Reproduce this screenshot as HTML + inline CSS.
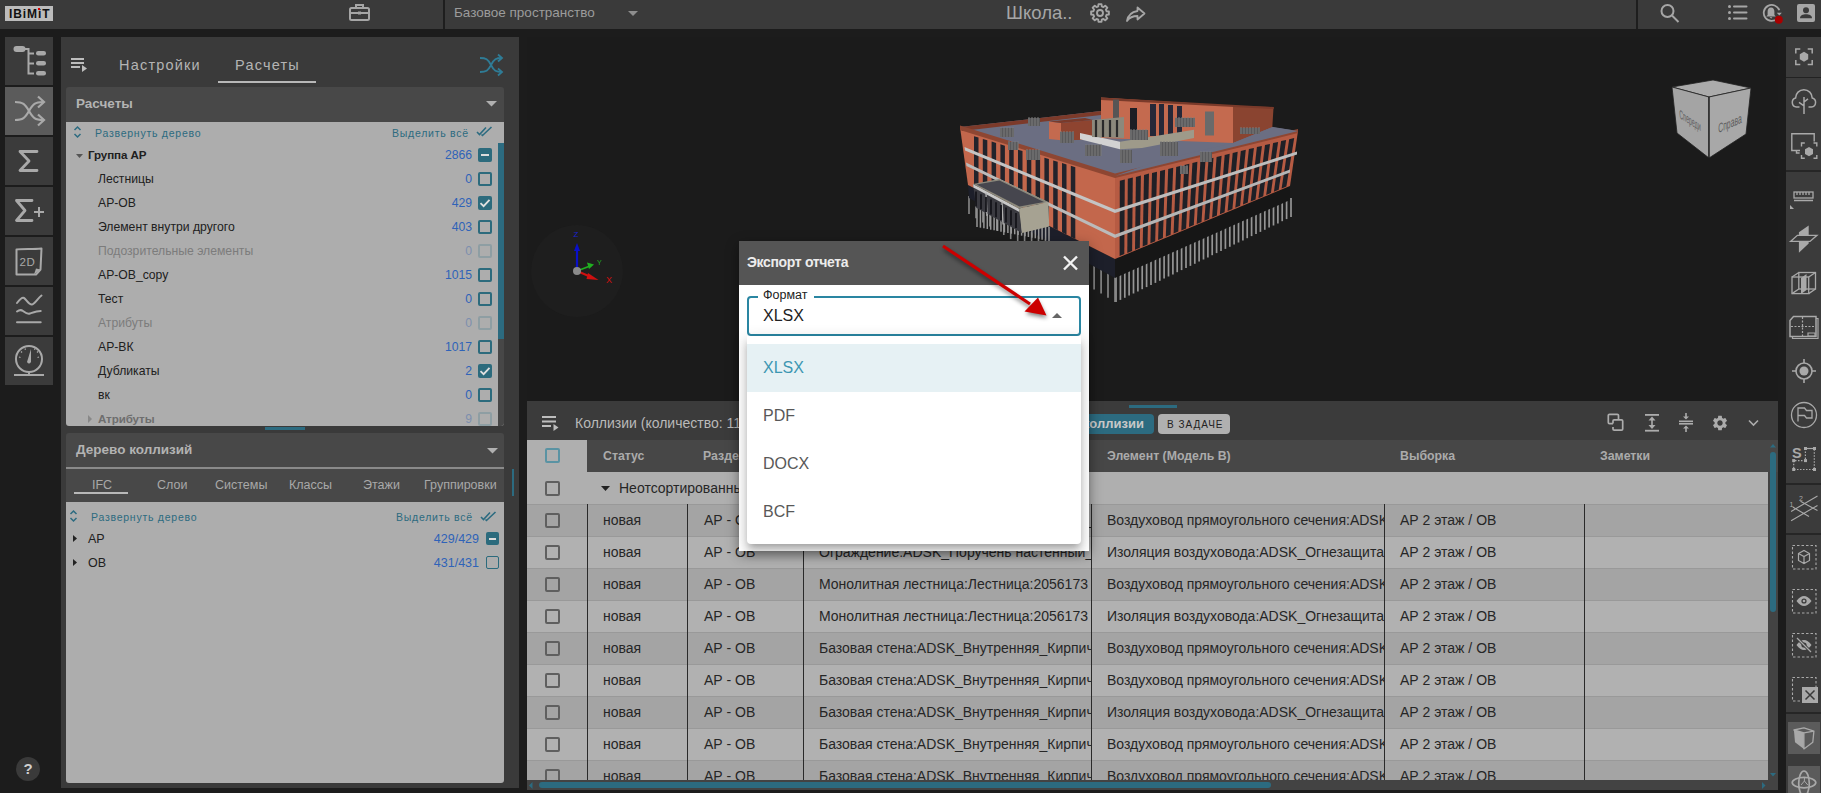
<!DOCTYPE html>
<html><head><meta charset="utf-8">
<style>
*{box-sizing:border-box;margin:0;padding:0}
html,body{width:1821px;height:793px;overflow:hidden;background:#1c1c1c;font-family:"Liberation Sans",sans-serif;position:relative}
.a{position:absolute}
svg{position:absolute;overflow:visible}
.sb{position:absolute;left:5px;width:48px;height:48px;background:#3b3b3b}
.t{position:absolute;white-space:nowrap;line-height:1}
.cb{position:absolute;width:14px;height:14px;border:2px solid #2c6b7d;border-radius:2px}
.cbd{position:absolute;width:15px;height:15px;border:2px solid #5f5f5f;border-radius:2px}
.rb{position:absolute;left:1787px;width:34px;background:#3b3b3b}
</style></head><body>
<div class="a" style="left:0;top:0;width:1821px;height:29px;background:#3a3a3a"></div>
<div class="a" style="left:5px;top:6px;width:48px;height:15px;background:#bcbcbc"></div>
<div class="t" style="left:9px;top:7.5px;font-size:12px;font-weight:bold;color:#111;letter-spacing:0.9px">IBiMiT</div><div class="a" style="left:38px;top:8px;width:2px;height:2px;background:#d00"></div>
<div class="a" style="left:443px;top:0;width:2px;height:29px;background:#1e1e1e"></div>
<div class="a" style="left:1636px;top:0;width:2px;height:29px;background:#1e1e1e"></div>
<div class="t" style="left:454px;top:6px;font-size:13.5px;color:#9c9c9c">Базовое пространство</div>
<svg style="left:628px;top:11px" width="11" height="6"><path d="M0 0H10L5 5Z" fill="#8e8e8e"/></svg>
<div class="t" style="left:1006px;top:4px;font-size:18.5px;color:#a6a6a6">Школа..</div>
<svg style="left:349px;top:3px" width="21" height="18"><g fill="none" stroke="#a6a6a6" stroke-width="2"><rect x="1" y="5" width="19" height="12" rx="1.5"/><path d="M7 5V2H14V5M1 10H20"/></g><rect x="9" y="8.5" width="3" height="3" fill="#a6a6a6"/></svg>
<svg style="left:1090px;top:3px" width="20" height="20"><path d="M16.56 8.23L18.88 8.52L18.88 11.48L16.56 11.77L15.90 13.39L17.32 15.23L15.23 17.32L13.39 15.90L11.77 16.56L11.48 18.88L8.52 18.88L8.23 16.56L6.61 15.90L4.77 17.32L2.68 15.23L4.10 13.39L3.44 11.77L1.12 11.48L1.12 8.52L3.44 8.23L4.10 6.61L2.68 4.77L4.77 2.68L6.61 4.10L8.23 3.44L8.52 1.12L11.48 1.12L11.77 3.44L13.39 4.10L15.23 2.68L17.32 4.77L15.90 6.61Z" fill="none" stroke="#a6a6a6" stroke-width="1.9" stroke-linejoin="round"/><circle cx="10" cy="10" r="3" fill="none" stroke="#a6a6a6" stroke-width="1.9"/></svg>
<svg style="left:1126px;top:6px" width="20" height="16"><path d="M11.5 1.5L18.5 7.5L11.5 13.5V10C6.5 10 3.5 11.3 1 15C2 9.5 5 6 11.5 5Z" fill="none" stroke="#a6a6a6" stroke-width="1.8" stroke-linejoin="round"/></svg>
<svg style="left:1660px;top:4px" width="20" height="18"><g fill="none" stroke="#a6a6a6" stroke-width="2"><circle cx="7.5" cy="7" r="6"/><path d="M12 11.5L18.5 18"/></g></svg>
<svg style="left:1728px;top:5px" width="20" height="15"><g fill="#a6a6a6"><circle cx="1.5" cy="1.5" r="1.5"/><circle cx="1.5" cy="7.5" r="1.5"/><circle cx="1.5" cy="13.5" r="1.5"/><rect x="5" y="0.5" width="14.5" height="2" rx="1"/><rect x="5" y="6.5" width="14.5" height="2" rx="1"/><rect x="5" y="12.5" width="14.5" height="2" rx="1"/></g></svg>
<svg style="left:1762px;top:4px" width="22" height="19"><path d="M15.5 14.5A8 8 0 1 1 17.3 6.3" fill="none" stroke="#a6a6a6" stroke-width="1.8"/><path d="M14.8 8.8H19.8L17.3 11.5Z" fill="#a6a6a6"/><path d="M9 3.5C6.7 3.5 5.6 5.4 5.6 7.8V11L4.2 12.6H13.8L12.4 11V7.8C12.4 5.4 11.3 3.5 9 3.5Z M7.8 13.2H10.2C10.2 14 9.7 14.4 9 14.4S7.8 14 7.8 13.2Z" fill="#a6a6a6"/><circle cx="16.8" cy="15.8" r="4" fill="#a80000"/></svg>
<svg style="left:1797px;top:4px" width="18" height="18"><rect width="18" height="18" rx="2" fill="#a6a6a6"/><circle cx="9" cy="6.3" r="3" fill="#3a3a3a"/><path d="M3 14.2C3 11.3 6 10.3 9 10.3S15 11.3 15 14.2Z" fill="#3a3a3a"/></svg>
<div class="sb" style="top:37px;background:#3b3b3b"></div>
<div class="sb" style="top:87px;background:#5b5b5b"></div>
<div class="sb" style="top:137px;background:#3b3b3b"></div>
<div class="sb" style="top:187px;background:#3b3b3b"></div>
<div class="sb" style="top:237px;background:#3b3b3b"></div>
<div class="sb" style="top:287px;background:#3b3b3b"></div>
<div class="sb" style="top:337px;background:#3b3b3b"></div>
<svg style="left:5px;top:37px" width="48" height="48"><g fill="#a9a9a9"><rect x="8.5" y="9" width="12" height="6" rx="3"/><rect x="31" y="14" width="10" height="4.5" rx="2.25"/><rect x="31" y="24" width="10" height="4.5" rx="2.25"/><rect x="31" y="34" width="10" height="4.5" rx="2.25"/></g><path d="M19 12H23.5V36.5H29M23.5 16.5H29M23.5 26.5H29" fill="none" stroke="#a9a9a9" stroke-width="2"/></svg>
<svg style="left:5px;top:87px" width="48" height="48"><g fill="none" stroke="#a9a9a9" stroke-width="2.2"><path d="M10 15C18 15 20 17 24 24S30 33 38 33M10 33C18 33 20 31 24 24S30 15 38 15"/><path d="M33 9.5L39 15L33 20.5M33 27.5L39 33L33 38.5"/></g></svg>
<svg style="left:5px;top:137px" width="48" height="48"><path d="M32 14.5H15L24 24L15 33.5H32" fill="none" stroke="#a9a9a9" stroke-width="2.8" stroke-linecap="round" stroke-linejoin="round"/></svg>
<svg style="left:5px;top:187px" width="48" height="48"><path d="M27 13.5H11.5L20 23.5L11.5 33.5H27" fill="none" stroke="#a9a9a9" stroke-width="2.8" stroke-linecap="round" stroke-linejoin="round"/><path d="M34 20V30M29 25H39" stroke="#a9a9a9" stroke-width="2"/></svg>
<svg style="left:5px;top:237px" width="48" height="48"><path d="M11.5 12.5C18 11.5 27 12.5 36.5 11.5L35.5 32.5L31 37.5H11.5Z" fill="none" stroke="#a9a9a9" stroke-width="2" stroke-linejoin="round"/><path d="M29 37.5L35.5 32.5L31 31.5Z" fill="#a9a9a9"/><text x="14.5" y="28.5" font-family="Liberation Sans" font-size="11.5" fill="#a9a9a9" letter-spacing="0.5">2D</text></svg>
<svg style="left:5px;top:287px" width="48" height="48"><g fill="none" stroke="#a9a9a9" stroke-width="2" stroke-linecap="round"><path d="M12 16C15 12 17 10 19 11S24 18 27 17.5S33 11 36.5 8.5M12 24.5C14 23 16 22.5 18 24S22 27.5 25 26.5S32 24 35.7 24M12 35.3H35.7"/></g></svg>
<svg style="left:5px;top:337px" width="48" height="48"><g fill="none" stroke="#a9a9a9" stroke-width="2"><circle cx="24" cy="22" r="13"/><path d="M9 38H39M24 35V38"/></g><path d="M26 12L22 25Q24 28 26 25Z" fill="#a9a9a9"/><g stroke="#a9a9a9" stroke-width="1.3"><path d="M14 20L15.5 20.5M16 14.5L17 15.5M20 11.5L20.5 12.8M30 11.5L29.5 12.8M33 14.5L32 15.5M34 20L32.5 20.5"/></g></svg>
<div class="a" style="left:16px;top:757px;width:24px;height:24px;border-radius:12px;background:#3a3a3a"></div><div class="t" style="left:23.5px;top:761px;font-size:15px;font-weight:bold;color:#cfcfcf">?</div>
<div class="a" style="left:61px;top:37px;width:458px;height:751px;background:#3a3a3a"></div>
<svg style="left:71px;top:57px" width="20" height="16"><g fill="#bdbdbd"><rect x="0" y="1" width="13" height="2"/><rect x="0" y="5" width="13" height="2"/><rect x="0" y="9" width="9" height="2"/><path d="M11 8L16 11.5L11 15Z"/></g></svg>
<div class="t" style="left:119px;top:58px;font-size:14.5px;color:#b4b4b4;letter-spacing:1.2px">Настройки</div>
<div class="t" style="left:235px;top:58px;font-size:14.5px;color:#b4b4b4;letter-spacing:1.2px">Расчеты</div>
<div class="a" style="left:218px;top:81px;width:98px;height:2px;background:#b8b8b8"></div>
<svg style="left:478px;top:53px" width="26" height="24"><g fill="none" stroke="#2f7c96" stroke-width="1.8"><path d="M2 5C8 5 10 6 13 12S18 19 24 19M2 19C8 19 10 18 13 12S18 5 24 5"/><path d="M20 1.5L24 5L20 8.5M20 15.5L24 19L20 22.5"/></g></svg>
<div class="a" style="left:66px;top:87px;width:438px;height:35px;background:#484848;border-radius:3px 3px 0 0"></div>
<div class="t" style="left:76px;top:97px;font-size:13.5px;font-weight:bold;color:#b3b3b3">Расчеты</div>
<svg style="left:486px;top:101px" width="12" height="6"><path d="M0 0H11L5.5 5.5Z" fill="#b0b0b0"/></svg>
<div class="a" style="left:66px;top:122px;width:438px;height:304px;background:#adadad;border-radius:0 0 3px 3px"></div>
<svg style="left:73px;top:125px" width="10" height="14"><path d="M1.5 5L4.5 2L7.5 5M1.5 9L4.5 12L7.5 9" fill="none" stroke="#2c6b80" stroke-width="1.5"/></svg>
<div class="t" style="left:95px;top:127.5px;font-size:10.5px;color:#2c6b80;letter-spacing:0.75px">Развернуть дерево</div>
<div class="t" style="left:392px;top:127.5px;font-size:10.5px;color:#2c6b80;letter-spacing:0.75px">Выделить всё</div>
<svg style="left:476px;top:126px" width="17" height="11"><path d="M1 6L3.5 8.5L10 1.5M5.5 8.5L6.5 9.5L15.5 1" fill="none" stroke="#2c6b80" stroke-width="1.6"/></svg>
<div class="a" style="left:498px;top:143px;width:6px;height:283px;background:#474747;border-radius:0 0 3px 0"></div><div class="a" style="left:498px;top:143px;width:6px;height:196px;background:#2c6b80"></div>
<div class="a" style="left:265px;top:427px;width:40px;height:3px;background:#2c6b80"></div>
<div class="a" style="left:66px;top:143px;width:432px;height:283px;overflow:hidden"><div class="t" style="left:22px;top:6px;font-size:11.6px;color:#202020;font-weight:bold;letter-spacing:-0.1px">Группа АР</div><div class="t" style="right:26px;top:6px;font-size:12.2px;color:#2f63b8">2866</div><div class="a" style="left:412px;top:5px;width:14px;height:14px;background:#2c6b7d;border-radius:2px"></div><div class="a" style="left:415px;top:11px;width:8px;height:2px;background:#dcdcdc"></div>
<div class="t" style="left:32px;top:30px;font-size:12.2px;color:#202020;font-weight:normal;letter-spacing:0px">Лестницы</div><div class="t" style="right:26px;top:30px;font-size:12.2px;color:#2f63b8">0</div><div class="cb" style="left:412px;top:29px;border-color:#2c6b7d"></div>
<div class="t" style="left:32px;top:54px;font-size:12.2px;color:#202020;font-weight:normal;letter-spacing:0px">АР-ОВ</div><div class="t" style="right:26px;top:54px;font-size:12.2px;color:#2f63b8">429</div><div class="a" style="left:412px;top:53px;width:14px;height:14px;background:#2c6b7d;border-radius:2px"></div><svg style="left:412px;top:53px" width="14" height="14"><path d="M2.5 7.2L5.6 10.2L11.5 3.8" stroke="#e0e0e0" stroke-width="1.8" fill="none"/></svg>
<div class="t" style="left:32px;top:78px;font-size:12.2px;color:#202020;font-weight:normal;letter-spacing:0px">Элемент внутри другого</div><div class="t" style="right:26px;top:78px;font-size:12.2px;color:#2f63b8">403</div><div class="cb" style="left:412px;top:77px;border-color:#2c6b7d"></div>
<div class="t" style="left:32px;top:102px;font-size:12.2px;color:#7c7c7c;font-weight:normal;letter-spacing:0px">Подозрительные элементы</div><div class="t" style="right:26px;top:102px;font-size:12.2px;color:#7d8fae">0</div><div class="cb" style="left:412px;top:101px;border-color:#8e9ea3"></div>
<div class="t" style="left:32px;top:126px;font-size:12.2px;color:#202020;font-weight:normal;letter-spacing:0px">АР-ОВ_copy</div><div class="t" style="right:26px;top:126px;font-size:12.2px;color:#2f63b8">1015</div><div class="cb" style="left:412px;top:125px;border-color:#2c6b7d"></div>
<div class="t" style="left:32px;top:150px;font-size:12.2px;color:#202020;font-weight:normal;letter-spacing:0px">Тест</div><div class="t" style="right:26px;top:150px;font-size:12.2px;color:#2f63b8">0</div><div class="cb" style="left:412px;top:149px;border-color:#2c6b7d"></div>
<div class="t" style="left:32px;top:174px;font-size:12.2px;color:#7c7c7c;font-weight:normal;letter-spacing:0px">Атрибуты</div><div class="t" style="right:26px;top:174px;font-size:12.2px;color:#7d8fae">0</div><div class="cb" style="left:412px;top:173px;border-color:#8e9ea3"></div>
<div class="t" style="left:32px;top:198px;font-size:12.2px;color:#202020;font-weight:normal;letter-spacing:0px">АР-ВК</div><div class="t" style="right:26px;top:198px;font-size:12.2px;color:#2f63b8">1017</div><div class="cb" style="left:412px;top:197px;border-color:#2c6b7d"></div>
<div class="t" style="left:32px;top:222px;font-size:12.2px;color:#202020;font-weight:normal;letter-spacing:0px">Дубликаты</div><div class="t" style="right:26px;top:222px;font-size:12.2px;color:#2f63b8">2</div><div class="a" style="left:412px;top:221px;width:14px;height:14px;background:#2c6b7d;border-radius:2px"></div><svg style="left:412px;top:221px" width="14" height="14"><path d="M2.5 7.2L5.6 10.2L11.5 3.8" stroke="#e0e0e0" stroke-width="1.8" fill="none"/></svg>
<div class="t" style="left:32px;top:246px;font-size:12.2px;color:#202020;font-weight:normal;letter-spacing:0px">вк</div><div class="t" style="right:26px;top:246px;font-size:12.2px;color:#2f63b8">0</div><div class="cb" style="left:412px;top:245px;border-color:#2c6b7d"></div>
<div class="t" style="left:32px;top:270px;font-size:11.6px;color:#6e6e6e;font-weight:bold;letter-spacing:-0.1px">Атрибуты</div><div class="t" style="right:26px;top:270px;font-size:12.2px;color:#7d8fae">9</div><div class="cb" style="left:412px;top:269px;border-color:#8e9ea3"></div>
<svg style="left:10px;top:11px" width="8" height="5"><path d="M0 0H7L3.5 4Z" fill="#555"/></svg><svg style="left:22px;top:272px" width="6" height="8"><path d="M0 0L4 4L0 8Z" fill="#888"/></svg></div>
<div class="a" style="left:66px;top:433px;width:438px;height:69px;background:#484848;border-radius:3px 3px 0 0"></div>
<div class="a" style="left:66px;top:467px;width:438px;height:2px;background:#8a8a8a"></div>
<div class="t" style="left:76px;top:443px;font-size:13.5px;font-weight:bold;color:#b3b3b3">Дерево коллизий</div>
<svg style="left:487px;top:448px" width="12" height="6"><path d="M0 0H11L5.5 5.5Z" fill="#b0b0b0"/></svg>
<div class="a" style="left:74px;top:492px;width:54px;height:2px;background:#b8b8b8"></div>
<div class="a" style="left:512px;top:469px;width:1.5px;height:27px;background:#2c6b80"></div>
<div class="t" style="left:92px;top:479px;font-size:12.5px;color:#a9a9a9">IFC</div>
<div class="t" style="left:157px;top:479px;font-size:12.5px;color:#a9a9a9">Слои</div>
<div class="t" style="left:215px;top:479px;font-size:12.5px;color:#a9a9a9">Системы</div>
<div class="t" style="left:289px;top:479px;font-size:12.5px;color:#a9a9a9">Классы</div>
<div class="t" style="left:363px;top:479px;font-size:12.5px;color:#a9a9a9">Этажи</div>
<div class="t" style="left:424px;top:479px;font-size:12.5px;color:#a9a9a9">Группировки</div>
<div class="a" style="left:66px;top:502px;width:438px;height:281px;background:#adadad;border-radius:0 0 3px 3px"></div>
<svg style="left:69px;top:509px" width="10" height="14"><path d="M1.5 5L4.5 2L7.5 5M1.5 9L4.5 12L7.5 9" fill="none" stroke="#2c6b80" stroke-width="1.5"/></svg>
<div class="t" style="left:91px;top:512px;font-size:10.5px;color:#2c6b80;letter-spacing:0.75px">Развернуть дерево</div>
<div class="t" style="left:396px;top:512px;font-size:10.5px;color:#2c6b80;letter-spacing:0.75px">Выделить всё</div>
<svg style="left:480px;top:511px" width="17" height="11"><path d="M1 6L3.5 8.5L10 1.5M5.5 8.5L6.5 9.5L15.5 1" fill="none" stroke="#2c6b80" stroke-width="1.6"/></svg>
<svg style="left:73px;top:535px" width="5" height="7"><path d="M0 0L4 3.5L0 7Z" fill="#222"/></svg>
<svg style="left:73px;top:559px" width="5" height="7"><path d="M0 0L4 3.5L0 7Z" fill="#222"/></svg>
<div class="t" style="left:88px;top:533px;font-size:12.5px;color:#202020">АР</div>
<div class="t" style="left:88px;top:557px;font-size:12.5px;color:#202020">ОВ</div>
<div class="t" style="right:1342px;top:533px;font-size:12.5px;color:#2f63b8">429/429</div>
<div class="t" style="right:1342px;top:557px;font-size:12.5px;color:#2f63b8">431/431</div>
<div class="a" style="left:486px;top:532px;width:13px;height:13px;background:#2c6b7d;border-radius:2px"></div><div class="a" style="left:489px;top:537.5px;width:7px;height:2px;background:#dcdcdc"></div>
<div class="cb" style="left:486px;top:556px;width:13px;height:13px;border-width:1.6px"></div>
<div class="a" style="left:527px;top:37px;width:1251px;height:364px;background:#1b1b1b"></div>
<svg style="left:527px;top:37px" width="1251" height="364">
<circle cx="50" cy="234" r="46" fill="#1e1e1e"/>
<path d="M50 234V210" stroke="#0a10c8" stroke-width="2.2"/><path d="M47 214L50 206L53 214Z" fill="#0a10c8"/>
<text x="46.5" y="200" font-family="Liberation Sans" font-size="8" fill="#1a22d0">Z</text>
<path d="M50 234L63 229" stroke="#20b020" stroke-width="1.8"/><path d="M60 225.5L67 227.5L62 232Z" fill="#20b020"/>
<text x="70" y="228" font-family="Liberation Sans" font-size="7" fill="#20b020">Y</text>
<path d="M50 234L64 240" stroke="#d01010" stroke-width="2"/><path d="M61 236L71.5 243L59.5 242Z" fill="#d01010"/>
<text x="79" y="246" font-family="Liberation Sans" font-size="9" fill="#d01010">X</text>
<circle cx="50" cy="234" r="4" fill="#8a8a8a"/>
</svg>
<svg style="left:1640px;top:60px" width="140" height="120">
<path d="M32 27L73 20L111 28L69 37Z" fill="#ababab" stroke="#222" stroke-width="0.8"/>
<path d="M32 27L69 37L69 98L37 73Z" fill="#a4a4a4" stroke="#222" stroke-width="0.8"/>
<path d="M69 37L111 28L106 74L69 98Z" fill="#a8a8a8" stroke="#222" stroke-width="0.8"/>
<path d="M69 37L69 98" stroke="#222" stroke-width="1.2"/>
<text x="0" y="4" text-anchor="middle" transform="matrix(0.48 0.3 0.05 1.15 50 60)" font-family="Liberation Sans" font-size="11" fill="#5c5c5c">Спереди</text>
<text x="0" y="4" text-anchor="middle" transform="matrix(0.62 -0.27 0 1.2 90 63)" font-family="Liberation Sans" font-size="11" fill="#5c5c5c">Справа</text>
</svg>
<svg style="left:0;top:0" width="1821" height="793"><path d="M1116.0 276.0V302.0" stroke="#959595" stroke-width="1.7"/><path d="M1120.4 274.1V299.9" stroke="#959595" stroke-width="1.7"/><path d="M1124.8 272.1V297.8" stroke="#959595" stroke-width="1.7"/><path d="M1129.1 270.1V295.6" stroke="#959595" stroke-width="1.7"/><path d="M1133.5 268.2V293.5" stroke="#959595" stroke-width="1.7"/><path d="M1137.9 266.2V291.4" stroke="#959595" stroke-width="1.7"/><path d="M1142.2 264.3V289.2" stroke="#959595" stroke-width="1.7"/><path d="M1146.6 262.4V287.1" stroke="#959595" stroke-width="1.7"/><path d="M1151.0 260.4V285.0" stroke="#959595" stroke-width="1.7"/><path d="M1155.4 258.4V282.9" stroke="#959595" stroke-width="1.7"/><path d="M1159.8 256.5V280.8" stroke="#959595" stroke-width="1.7"/><path d="M1164.1 254.6V278.6" stroke="#959595" stroke-width="1.7"/><path d="M1168.5 252.6V276.5" stroke="#959595" stroke-width="1.7"/><path d="M1172.9 250.7V274.4" stroke="#959595" stroke-width="1.7"/><path d="M1177.2 248.7V272.2" stroke="#959595" stroke-width="1.7"/><path d="M1181.6 246.8V270.1" stroke="#959595" stroke-width="1.7"/><path d="M1186.0 244.8V268.0" stroke="#959595" stroke-width="1.7"/><path d="M1190.4 242.8V265.9" stroke="#959595" stroke-width="1.7"/><path d="M1194.8 240.9V263.8" stroke="#959595" stroke-width="1.7"/><path d="M1199.1 238.9V261.6" stroke="#959595" stroke-width="1.7"/><path d="M1203.5 237.0V259.5" stroke="#959595" stroke-width="1.7"/><path d="M1207.9 235.1V257.4" stroke="#959595" stroke-width="1.7"/><path d="M1212.2 233.1V255.2" stroke="#959595" stroke-width="1.7"/><path d="M1216.6 231.2V253.1" stroke="#959595" stroke-width="1.7"/><path d="M1221.0 229.2V251.0" stroke="#959595" stroke-width="1.7"/><path d="M1225.4 227.2V248.9" stroke="#959595" stroke-width="1.7"/><path d="M1229.8 225.3V246.8" stroke="#959595" stroke-width="1.7"/><path d="M1234.1 223.3V244.6" stroke="#959595" stroke-width="1.7"/><path d="M1238.5 221.4V242.5" stroke="#959595" stroke-width="1.7"/><path d="M1242.9 219.4V240.4" stroke="#959595" stroke-width="1.7"/><path d="M1247.2 217.5V238.2" stroke="#959595" stroke-width="1.7"/><path d="M1251.6 215.6V236.1" stroke="#959595" stroke-width="1.7"/><path d="M1256.0 213.6V234.0" stroke="#959595" stroke-width="1.7"/><path d="M1260.4 211.7V231.9" stroke="#959595" stroke-width="1.7"/><path d="M1264.8 209.7V229.8" stroke="#959595" stroke-width="1.7"/><path d="M1269.1 207.8V227.6" stroke="#959595" stroke-width="1.7"/><path d="M1273.5 205.8V225.5" stroke="#959595" stroke-width="1.7"/><path d="M1277.9 203.8V223.4" stroke="#959595" stroke-width="1.7"/><path d="M1282.2 201.9V221.2" stroke="#959595" stroke-width="1.7"/><path d="M1286.6 199.9V219.1" stroke="#959595" stroke-width="1.7"/><path d="M1291.0 198.0V217.0" stroke="#959595" stroke-width="1.7"/><path d="M969.0 196.0V214.0" stroke="#8a8a8a" stroke-width="1.6"/><path d="M976.0 199.8V218.2" stroke="#8a8a8a" stroke-width="1.6"/><path d="M982.9 203.6V222.4" stroke="#8a8a8a" stroke-width="1.6"/><path d="M989.9 207.4V226.6" stroke="#8a8a8a" stroke-width="1.6"/><path d="M996.8 211.2V230.8" stroke="#8a8a8a" stroke-width="1.6"/><path d="M1003.8 215.0V235.0" stroke="#8a8a8a" stroke-width="1.6"/><path d="M1010.7 218.9V239.1" stroke="#8a8a8a" stroke-width="1.6"/><path d="M1017.7 222.7V243.3" stroke="#8a8a8a" stroke-width="1.6"/><path d="M1024.6 226.5V247.5" stroke="#8a8a8a" stroke-width="1.6"/><path d="M1031.6 230.3V251.7" stroke="#8a8a8a" stroke-width="1.6"/><path d="M1038.5 234.1V255.9" stroke="#8a8a8a" stroke-width="1.6"/><path d="M1045.5 237.9V260.1" stroke="#8a8a8a" stroke-width="1.6"/><path d="M1052.4 241.7V264.3" stroke="#8a8a8a" stroke-width="1.6"/><path d="M1059.4 245.5V268.5" stroke="#8a8a8a" stroke-width="1.6"/><path d="M1066.3 249.3V272.7" stroke="#8a8a8a" stroke-width="1.6"/><path d="M1073.3 253.1V276.9" stroke="#8a8a8a" stroke-width="1.6"/><path d="M1080.2 257.0V281.0" stroke="#8a8a8a" stroke-width="1.6"/><path d="M1087.2 260.8V285.2" stroke="#8a8a8a" stroke-width="1.6"/><path d="M1094.1 264.6V289.4" stroke="#8a8a8a" stroke-width="1.6"/><path d="M1101.1 268.4V293.6" stroke="#8a8a8a" stroke-width="1.6"/><path d="M1108.0 272.2V297.8" stroke="#8a8a8a" stroke-width="1.6"/><path d="M1115.0 276.0V302.0" stroke="#8a8a8a" stroke-width="1.6"/><path d="M1115.0 259.0L1290.0 186.0L1290.0 200.0L1115.0 278.0Z" fill="#161616" /><path d="M968.0 185.0L1115.0 259.0L1115.0 278.0L969.0 198.0Z" fill="#1d1f2a" /><path d="M1115.0 176.0L1298.0 131.0L1290.0 186.0L1115.0 259.0Z" fill="#b65b43" /><path d="M1119.8 180.8L1124.8 179.6L1124.3 254.1L1119.6 256.1Z" fill="#1f2026" /><path d="M1127.8 178.8L1132.8 177.6L1132.1 250.9L1127.3 252.9Z" fill="#1f2026" /><path d="M1135.9 176.9L1140.9 175.6L1139.8 247.7L1135.0 249.7Z" fill="#1f2026" /><path d="M1144.0 174.9L1149.0 173.6L1147.5 244.4L1142.7 246.4Z" fill="#1f2026" /><path d="M1152.0 172.9L1157.0 171.7L1155.2 241.2L1150.4 243.2Z" fill="#1f2026" /><path d="M1160.1 170.9L1165.1 169.7L1162.9 238.0L1158.1 240.0Z" fill="#1f2026" /><path d="M1168.2 168.9L1173.2 167.7L1170.6 234.8L1165.8 236.8Z" fill="#1f2026" /><path d="M1176.2 166.9L1181.2 165.7L1178.3 231.6L1173.6 233.6Z" fill="#1f2026" /><path d="M1184.3 165.0L1189.3 163.7L1186.1 228.4L1181.3 230.4Z" fill="#1f2026" /><path d="M1192.4 163.0L1197.4 161.7L1193.8 225.1L1189.0 227.1Z" fill="#1f2026" /><path d="M1200.4 161.0L1205.5 159.8L1201.5 221.9L1196.7 223.9Z" fill="#1f2026" /><path d="M1208.5 159.0L1213.5 157.8L1209.2 218.7L1204.4 220.7Z" fill="#1f2026" /><path d="M1216.6 157.0L1221.6 155.8L1216.9 215.5L1212.1 217.5Z" fill="#1f2026" /><path d="M1224.7 155.0L1229.7 153.8L1224.6 212.3L1219.9 214.3Z" fill="#1f2026" /><path d="M1232.7 153.1L1237.7 151.8L1232.4 209.0L1227.6 211.0Z" fill="#1f2026" /><path d="M1240.8 151.1L1245.8 149.8L1240.1 205.8L1235.3 207.8Z" fill="#1f2026" /><path d="M1248.9 149.1L1253.9 147.9L1247.8 202.6L1243.0 204.6Z" fill="#1f2026" /><path d="M1256.9 147.1L1261.9 145.9L1255.5 199.4L1250.7 201.4Z" fill="#1f2026" /><path d="M1265.0 145.1L1270.0 143.9L1263.2 196.2L1258.4 198.2Z" fill="#1f2026" /><path d="M1273.1 143.1L1278.1 141.9L1270.9 193.0L1266.2 194.9Z" fill="#1f2026" /><path d="M1281.1 141.1L1286.1 139.9L1278.7 189.7L1273.9 191.7Z" fill="#1f2026" /><path d="M1289.2 139.2L1294.2 137.9L1286.4 186.5L1281.6 188.5Z" fill="#1f2026" /><path d="M1115.0 209.5L1297.0 151.5L1297.0 154.5L1115.0 213.0Z" fill="#bdbdbd" /><path d="M1115.0 234.5L1290.0 169.5L1290.0 172.5L1115.0 238.0Z" fill="#b5b5b5" /><path d="M960.0 127.0L1115.0 176.0L1115.0 259.0L968.0 185.0Z" fill="#c3674c" /><path d="M974.0 136.3L978.5 137.6L978.5 190.3L974.0 188.0Z" fill="#22232b" /><path d="M982.8 139.0L987.3 140.3L987.3 194.7L982.8 192.5Z" fill="#22232b" /><path d="M991.6 141.6L996.1 143.0L996.1 199.1L991.6 196.9Z" fill="#22232b" /><path d="M1000.4 144.3L1004.9 145.7L1004.9 203.6L1000.4 201.3Z" fill="#22232b" /><path d="M1009.2 147.0L1013.7 148.4L1013.7 208.0L1009.2 205.7Z" fill="#22232b" /><path d="M1018.0 149.7L1022.5 151.1L1022.5 212.4L1018.0 210.2Z" fill="#22232b" /><path d="M1026.8 152.4L1031.3 153.7L1031.3 216.9L1026.8 214.6Z" fill="#22232b" /><path d="M1035.6 155.1L1040.1 156.4L1040.1 221.3L1035.6 219.0Z" fill="#22232b" /><path d="M1044.4 157.7L1048.9 159.1L1048.9 225.7L1044.4 223.5Z" fill="#22232b" /><path d="M1053.2 160.4L1057.7 161.8L1057.7 230.2L1053.2 227.9Z" fill="#22232b" /><path d="M1062.0 163.1L1066.5 164.5L1066.5 234.6L1062.0 232.3Z" fill="#22232b" /><path d="M1070.8 165.8L1075.3 167.2L1075.3 239.0L1070.8 236.7Z" fill="#22232b" /><path d="M964.5 147.0L1115.0 209.5L1115.0 213.0L965.0 150.5Z" fill="#c4c4c4" /><path d="M966.0 162.5L1115.0 234.5L1115.0 238.0L966.5 166.0Z" fill="#bbbbbb" /><path d="M960.0 127.0L1101.0 111.0L1140.0 106.0L1298.0 131.0L1115.0 176.0Z" fill="#6b6e82" /><path d="M960.0 127.0L1101.0 111.0L1101.0 115.0L962.0 131.0Z" fill="#7c3a2a" /><path d="M960.0 130.0L1115.0 178.0L1298.0 133.0L1298.0 129.0L1115.0 173.5L960.0 125.5Z" fill="#8e4632" /><path d="M1101.0 97.6L1233.0 105.8L1233.0 143.0L1101.0 138.0Z" fill="#c46a4f" /><path d="M1233.0 105.8L1273.6 107.0L1272.3 127.2L1233.0 143.0Z" fill="#8a4430" /><path d="M1101.0 97.6L1273.6 107.0L1273.6 109.0L1101.0 100.0Z" fill="#7a3a2a" /><path d="M1113.0 99.5L1119.0 99.5L1119.0 118.0L1113.0 118.0Z" fill="#555" /><path d="M1130.0 108.0L1137.0 108.0L1137.0 138.0L1130.0 138.0Z" fill="#1e1e24" /><path d="M1150.0 104.0L1156.0 104.0L1156.0 136.0L1150.0 136.0Z" fill="#262838" /><path d="M1159.0 104.0L1164.0 104.0L1164.0 136.0L1159.0 136.0Z" fill="#262838" /><path d="M1168.0 105.0L1173.0 105.0L1173.0 137.0L1168.0 137.0Z" fill="#262838" /><path d="M1177.0 106.0L1182.0 106.0L1182.0 137.0L1177.0 137.0Z" fill="#262838" /><path d="M1205.0 111.5L1214.0 111.5L1214.0 135.5L1205.0 135.5Z" fill="#6a6a6a" /><path d="M1233.0 143.0L1272.3 127.2L1298.0 131.0L1115.0 176.0L1160.0 160.0Z" fill="#6b6e82" /><path d="M1049.0 121.6L1061.0 123.0L1061.0 140.3L1049.0 139.0Z" fill="#c46a4f" /><path d="M1061.0 123.0L1093.0 120.0L1093.0 139.7L1061.0 140.3Z" fill="#8e4430" /><path d="M1049.0 121.6L1085.0 118.0L1093.0 120.0L1061.0 123.0Z" fill="#7a3a2a" /><path d="M1080.0 133.0L1120.0 141.7L1120.0 149.3L1080.0 139.2Z" fill="#d2d2d2" /><path d="M1120.0 141.7L1194.0 129.8L1194.0 138.0L1142.0 148.0L1120.0 149.3Z" fill="#9e9a8a" /><path d="M1092.0 120.0L1124.0 117.0L1124.0 138.0L1092.0 137.0Z" fill="#8c897c" /><path d="M1096 120V137" stroke="#2a2a2a" stroke-width="2.2"/><path d="M1103 120V137" stroke="#2a2a2a" stroke-width="2.2"/><path d="M1110 120V137" stroke="#2a2a2a" stroke-width="2.2"/><path d="M1117 120V137" stroke="#2a2a2a" stroke-width="2.2"/><rect x="1000" y="128" width="14" height="9" fill="#59595b"/><path d="M1001 127V137" stroke="#7c7c7c" stroke-width="1"/><path d="M1004 127V137" stroke="#7c7c7c" stroke-width="1"/><path d="M1007 127V137" stroke="#7c7c7c" stroke-width="1"/><path d="M1010 127V137" stroke="#7c7c7c" stroke-width="1"/><path d="M1013 127V137" stroke="#7c7c7c" stroke-width="1"/><rect x="1028" y="118" width="12" height="8" fill="#59595b"/><path d="M1029 117V126" stroke="#7c7c7c" stroke-width="1"/><path d="M1032 117V126" stroke="#7c7c7c" stroke-width="1"/><path d="M1035 117V126" stroke="#7c7c7c" stroke-width="1"/><path d="M1038 117V126" stroke="#7c7c7c" stroke-width="1"/><rect x="1060" y="132" width="14" height="11" fill="#59595b"/><path d="M1061 131V143" stroke="#7c7c7c" stroke-width="1"/><path d="M1064 131V143" stroke="#7c7c7c" stroke-width="1"/><path d="M1067 131V143" stroke="#7c7c7c" stroke-width="1"/><path d="M1070 131V143" stroke="#7c7c7c" stroke-width="1"/><path d="M1073 131V143" stroke="#7c7c7c" stroke-width="1"/><rect x="1026" y="150" width="14" height="10" fill="#59595b"/><path d="M1027 149V160" stroke="#7c7c7c" stroke-width="1"/><path d="M1030 149V160" stroke="#7c7c7c" stroke-width="1"/><path d="M1033 149V160" stroke="#7c7c7c" stroke-width="1"/><path d="M1036 149V160" stroke="#7c7c7c" stroke-width="1"/><path d="M1039 149V160" stroke="#7c7c7c" stroke-width="1"/><rect x="1085" y="145" width="16" height="11" fill="#59595b"/><path d="M1086 144V156" stroke="#7c7c7c" stroke-width="1"/><path d="M1089 144V156" stroke="#7c7c7c" stroke-width="1"/><path d="M1092 144V156" stroke="#7c7c7c" stroke-width="1"/><path d="M1095 144V156" stroke="#7c7c7c" stroke-width="1"/><path d="M1098 144V156" stroke="#7c7c7c" stroke-width="1"/><path d="M1101 144V156" stroke="#7c7c7c" stroke-width="1"/><rect x="1120" y="150" width="12" height="13" fill="#59595b"/><path d="M1121 149V163" stroke="#7c7c7c" stroke-width="1"/><path d="M1124 149V163" stroke="#7c7c7c" stroke-width="1"/><path d="M1127 149V163" stroke="#7c7c7c" stroke-width="1"/><path d="M1130 149V163" stroke="#7c7c7c" stroke-width="1"/><rect x="1160" y="142" width="18" height="14" fill="#59595b"/><path d="M1161 141V156" stroke="#7c7c7c" stroke-width="1"/><path d="M1164 141V156" stroke="#7c7c7c" stroke-width="1"/><path d="M1167 141V156" stroke="#7c7c7c" stroke-width="1"/><path d="M1170 141V156" stroke="#7c7c7c" stroke-width="1"/><path d="M1173 141V156" stroke="#7c7c7c" stroke-width="1"/><path d="M1176 141V156" stroke="#7c7c7c" stroke-width="1"/><rect x="1200" y="152" width="12" height="10" fill="#59595b"/><path d="M1201 151V162" stroke="#7c7c7c" stroke-width="1"/><path d="M1204 151V162" stroke="#7c7c7c" stroke-width="1"/><path d="M1207 151V162" stroke="#7c7c7c" stroke-width="1"/><path d="M1210 151V162" stroke="#7c7c7c" stroke-width="1"/><rect x="1130" y="130" width="18" height="10" fill="#59595b"/><path d="M1131 129V140" stroke="#7c7c7c" stroke-width="1"/><path d="M1134 129V140" stroke="#7c7c7c" stroke-width="1"/><path d="M1137 129V140" stroke="#7c7c7c" stroke-width="1"/><path d="M1140 129V140" stroke="#7c7c7c" stroke-width="1"/><path d="M1143 129V140" stroke="#7c7c7c" stroke-width="1"/><path d="M1146 129V140" stroke="#7c7c7c" stroke-width="1"/><rect x="1008" y="142" width="10" height="8" fill="#59595b"/><path d="M1009 141V150" stroke="#7c7c7c" stroke-width="1"/><path d="M1012 141V150" stroke="#7c7c7c" stroke-width="1"/><path d="M1015 141V150" stroke="#7c7c7c" stroke-width="1"/><path d="M1018 141V150" stroke="#7c7c7c" stroke-width="1"/><rect x="1175" y="118" width="20" height="9" fill="#59595b"/><path d="M1176 117V127" stroke="#7c7c7c" stroke-width="1"/><path d="M1179 117V127" stroke="#7c7c7c" stroke-width="1"/><path d="M1182 117V127" stroke="#7c7c7c" stroke-width="1"/><path d="M1185 117V127" stroke="#7c7c7c" stroke-width="1"/><path d="M1188 117V127" stroke="#7c7c7c" stroke-width="1"/><path d="M1191 117V127" stroke="#7c7c7c" stroke-width="1"/><path d="M1194 117V127" stroke="#7c7c7c" stroke-width="1"/><rect x="1240" y="128" width="20" height="6" fill="#59595b"/><path d="M1241 127V134" stroke="#7c7c7c" stroke-width="1"/><path d="M1244 127V134" stroke="#7c7c7c" stroke-width="1"/><path d="M1247 127V134" stroke="#7c7c7c" stroke-width="1"/><path d="M1250 127V134" stroke="#7c7c7c" stroke-width="1"/><path d="M1253 127V134" stroke="#7c7c7c" stroke-width="1"/><path d="M1256 127V134" stroke="#7c7c7c" stroke-width="1"/><path d="M1259 127V134" stroke="#7c7c7c" stroke-width="1"/><rect x="1180" y="166" width="8" height="8" fill="#59595b"/><path d="M1181 165V174" stroke="#7c7c7c" stroke-width="1"/><path d="M1184 165V174" stroke="#7c7c7c" stroke-width="1"/><path d="M1187 165V174" stroke="#7c7c7c" stroke-width="1"/><path d="M977.0 205.0V227.0" stroke="#9a9a9a" stroke-width="1.5"/><path d="M980.4 206.0V227.7" stroke="#9a9a9a" stroke-width="1.5"/><path d="M983.9 207.1V228.3" stroke="#9a9a9a" stroke-width="1.5"/><path d="M987.3 208.1V229.0" stroke="#9a9a9a" stroke-width="1.5"/><path d="M990.7 209.2V229.7" stroke="#9a9a9a" stroke-width="1.5"/><path d="M994.1 210.2V230.3" stroke="#9a9a9a" stroke-width="1.5"/><path d="M997.6 211.3V231.0" stroke="#9a9a9a" stroke-width="1.5"/><path d="M1001.0 212.3V231.7" stroke="#9a9a9a" stroke-width="1.5"/><path d="M1004.4 213.4V232.3" stroke="#9a9a9a" stroke-width="1.5"/><path d="M1007.9 214.4V233.0" stroke="#9a9a9a" stroke-width="1.5"/><path d="M1011.3 215.5V233.7" stroke="#9a9a9a" stroke-width="1.5"/><path d="M1014.7 216.5V234.3" stroke="#9a9a9a" stroke-width="1.5"/><path d="M1018.1 217.6V235.0" stroke="#9a9a9a" stroke-width="1.5"/><path d="M1021.6 218.6V235.7" stroke="#9a9a9a" stroke-width="1.5"/><path d="M1025.0 219.7V236.3" stroke="#9a9a9a" stroke-width="1.5"/><path d="M1028.4 220.7V237.0" stroke="#9a9a9a" stroke-width="1.5"/><path d="M1031.9 221.8V237.7" stroke="#9a9a9a" stroke-width="1.5"/><path d="M1035.3 222.8V238.3" stroke="#9a9a9a" stroke-width="1.5"/><path d="M1038.7 223.9V239.0" stroke="#9a9a9a" stroke-width="1.5"/><path d="M1042.1 224.9V239.7" stroke="#9a9a9a" stroke-width="1.5"/><path d="M1045.6 226.0V240.3" stroke="#9a9a9a" stroke-width="1.5"/><path d="M1049.0 227.0V241.0" stroke="#9a9a9a" stroke-width="1.5"/><path d="M973.0 184.0L1018.9 208.5L1022.0 233.0L976.2 207.7Z" fill="#3a3a40" /><path d="M973.0 184.0L1018.9 208.5L1019.3 212.0L973.4 187.5Z" fill="#c8c8c8" /><path d="M986 192.9L987.0 215.9" stroke="#b0b0b0" stroke-width="1.3"/><path d="M1002 201.5L1003.0 224.5" stroke="#b0b0b0" stroke-width="1.3"/><path d="M976.0 191.6V206.6" stroke="#15151a" stroke-width="1.8"/><path d="M981.0 194.3V209.3" stroke="#15151a" stroke-width="1.8"/><path d="M986.0 196.9V211.9" stroke="#15151a" stroke-width="1.8"/><path d="M991.0 199.6V214.6" stroke="#15151a" stroke-width="1.8"/><path d="M996.0 202.3V217.3" stroke="#15151a" stroke-width="1.8"/><path d="M1001.0 205.0V220.0" stroke="#15151a" stroke-width="1.8"/><path d="M1006.0 207.6V222.6" stroke="#15151a" stroke-width="1.8"/><path d="M1011.0 210.3V225.3" stroke="#15151a" stroke-width="1.8"/><path d="M1016.0 213.0V228.0" stroke="#15151a" stroke-width="1.8"/><path d="M1018.9 208.5L1048.4 202.0L1049.2 226.6L1022.0 233.0Z" fill="#a6a292" /><path d="M973.0 184.0L999.2 179.0L1048.4 202.0L1018.9 208.5Z" fill="#8c897c" /><path d="M976.5 184.5L999.5 180.5L1044.0 202.0L1019.5 206.5Z" fill="#46464e" /></svg>
<div class="a" style="left:527px;top:401px;width:1251px;height:389px;background:#3b3b3b"></div>
<div class="a" style="left:1129px;top:405px;width:48px;height:3px;background:#2c6b80"></div>
<svg style="left:542px;top:415px" width="18" height="16"><g fill="#bdbdbd"><rect x="0" y="1" width="14" height="2"/><rect x="0" y="5.5" width="14" height="2"/><rect x="0" y="10" width="9" height="2"/><path d="M11.5 9L16.5 12.5L11.5 16Z"/></g></svg>
<div class="t" style="left:575px;top:416px;font-size:14px;color:#b9b9b9">Коллизии (количество: 1122)</div>
<div class="a" style="left:1060px;top:414px;width:94px;height:20px;background:#2c6b80;border-radius:4px"></div>
<div class="t" style="left:1083px;top:417px;font-size:13px;font-weight:bold;color:#c8c8c8">коллизии</div>
<div class="a" style="left:1158px;top:414px;width:72px;height:20px;background:#b0b0b0;border-radius:4px"></div>
<div class="t" style="left:1167px;top:420px;font-size:10px;color:#222;letter-spacing:1.0px">В ЗАДАЧЕ</div>
<svg style="left:1607px;top:413px" width="20" height="20"><g fill="none" stroke="#acacac" stroke-width="1.7"><path d="M11.5 6V2.5C11.5 1.8 11 1.3 10.3 1.3H2.5C1.8 1.3 1.3 1.8 1.3 2.5V9.5C1.3 10.2 1.8 10.7 2.5 10.7H6"/><path d="M6 10.5V8C6 7.3 6.5 6.8 7.2 6.8H14.5C15.2 6.8 15.7 7.3 15.7 8V16C15.7 16.7 15.2 17.2 14.5 17.2H7.2C6.5 17.2 6 16.7 6 16V14"/></g></svg>
<svg style="left:1645px;top:414px" width="15" height="18"><g fill="#acacac"><rect x="0" y="0" width="14" height="1.8"/><rect x="0" y="15.8" width="14" height="1.8"/><path d="M7 2.5L10.5 6.5H3.5Z M7 15L10.5 11H3.5Z"/><rect x="6.2" y="5" width="1.6" height="7.5"/></g></svg>
<svg style="left:1679px;top:413px" width="15" height="19"><g fill="#acacac"><rect x="0" y="7.5" width="14" height="1.6"/><rect x="0" y="10" width="14" height="1.6"/><path d="M7 6.5L10 3.5H4Z M7 12.5L10 15.5H4Z"/><rect x="6.2" y="0" width="1.6" height="4"/><rect x="6.2" y="15" width="1.6" height="4"/></g></svg>
<svg style="left:1711px;top:414px" width="18" height="18" viewBox="0 0 24 24"><path fill="#acacac" d="M19.14 12.94c.04-.3.06-.61.06-.94 0-.32-.02-.64-.07-.94l2.03-1.58a.49.49 0 0 0 .12-.61l-1.92-3.32a.488.488 0 0 0-.59-.22l-2.39.96c-.5-.38-1.03-.7-1.62-.94l-.36-2.54a.484.484 0 0 0-.48-.41h-3.84c-.24 0-.43.17-.47.41l-.36 2.54c-.59.24-1.13.57-1.62.94l-2.39-.96c-.22-.08-.47 0-.59.22L2.74 8.87c-.12.21-.08.47.12.61l2.03 1.58c-.05.3-.09.63-.09.94s.02.64.07.94l-2.03 1.58a.49.49 0 0 0-.12.61l1.92 3.32c.12.22.37.29.59.22l2.39-.96c.5.38 1.03.7 1.62.94l.36 2.54c.05.24.24.41.48.41h3.84c.24 0 .44-.17.47-.41l.36-2.54c.59-.24 1.13-.56 1.62-.94l2.39.96c.22.08.47 0 .59-.22l1.92-3.32c.12-.22.07-.47-.12-.61l-2.01-1.58zM12 15.6c-1.98 0-3.6-1.62-3.6-3.6s1.62-3.6 3.6-3.6 3.6 1.62 3.6 3.6-1.62 3.6-3.6 3.6z"/></svg>
<svg style="left:1748px;top:419px" width="12" height="9"><path d="M1 1.5L5.5 6L10 1.5" fill="none" stroke="#acacac" stroke-width="1.6"/></svg>
<div class="a" style="left:527px;top:440px;width:60px;height:32px;background:#afafaf"></div>
<div class="a" style="left:587px;top:440px;width:1191px;height:32px;background:#474747"></div>
<div class="cbd" style="left:545px;top:448px;border-color:#5a93a3"></div>
<div class="t" style="left:603px;top:450px;font-size:12.3px;font-weight:bold;color:#ababab">Статус</div>
<div class="t" style="left:703px;top:450px;font-size:12.3px;font-weight:bold;color:#ababab">Раздел</div>
<div class="t" style="left:819px;top:450px;font-size:12.3px;font-weight:bold;color:#ababab">Элемент (Модель А)</div>
<div class="t" style="left:1107px;top:450px;font-size:12.3px;font-weight:bold;color:#ababab">Элемент (Модель В)</div>
<div class="t" style="left:1400px;top:450px;font-size:12.3px;font-weight:bold;color:#ababab">Выборка</div>
<div class="t" style="left:1600px;top:450px;font-size:12.3px;font-weight:bold;color:#ababab">Заметки</div>
<div class="a" style="left:527px;top:472px;width:1241px;height:308px;overflow:hidden"><div class="a" style="left:0;top:0;width:1241px;height:32px;background:#afafaf"></div><div class="cbd" style="left:18px;top:9px"></div><svg style="left:74px;top:14px" width="10" height="6"><path d="M0 0H9L4.5 5Z" fill="#222"/></svg><div class="t" style="left:92px;top:9px;font-size:14px;color:#262626">Неотсортированные</div><div class="a" style="left:0;top:32px;width:1241px;height:32px;background:#a4a4a4;border-top:1px solid #999999"></div><div class="cbd" style="left:18px;top:41px"></div><div class="t" style="left:76px;top:41px;font-size:14px;color:#262626">новая</div><div class="t" style="left:177px;top:41px;font-size:14px;color:#262626">АР - ОВ</div><div class="a" style="left:292px;top:41px;width:272px;height:18px;overflow:hidden"><div class="t" style="left:0;top:0;font-size:14px;color:#262626">Ограждение:ADSK_Поручень настенный_</div></div><div class="a" style="left:580px;top:41px;width:277px;height:18px;overflow:hidden"><div class="t" style="left:0;top:0;font-size:14px;color:#262626">Воздуховод прямоугольного сечения:ADSK</div></div><div class="t" style="left:873px;top:41px;font-size:14px;color:#262626">АР 2 этаж / ОВ</div>
<div class="a" style="left:0;top:64px;width:1241px;height:32px;background:#b1b1b1;border-top:1px solid #999999"></div><div class="cbd" style="left:18px;top:73px"></div><div class="t" style="left:76px;top:73px;font-size:14px;color:#262626">новая</div><div class="t" style="left:177px;top:73px;font-size:14px;color:#262626">АР - ОВ</div><div class="a" style="left:292px;top:73px;width:272px;height:18px;overflow:hidden"><div class="t" style="left:0;top:0;font-size:14px;color:#262626">Ограждение:ADSK_Поручень настенный_</div></div><div class="a" style="left:580px;top:73px;width:277px;height:18px;overflow:hidden"><div class="t" style="left:0;top:0;font-size:14px;color:#262626">Изоляция воздуховода:ADSK_Огнезащита</div></div><div class="t" style="left:873px;top:73px;font-size:14px;color:#262626">АР 2 этаж / ОВ</div>
<div class="a" style="left:0;top:96px;width:1241px;height:32px;background:#a4a4a4;border-top:1px solid #999999"></div><div class="cbd" style="left:18px;top:105px"></div><div class="t" style="left:76px;top:105px;font-size:14px;color:#262626">новая</div><div class="t" style="left:177px;top:105px;font-size:14px;color:#262626">АР - ОВ</div><div class="a" style="left:292px;top:105px;width:272px;height:18px;overflow:hidden"><div class="t" style="left:0;top:0;font-size:14px;color:#262626">Монолитная лестница:Лестница:2056173</div></div><div class="a" style="left:580px;top:105px;width:277px;height:18px;overflow:hidden"><div class="t" style="left:0;top:0;font-size:14px;color:#262626">Воздуховод прямоугольного сечения:ADSK</div></div><div class="t" style="left:873px;top:105px;font-size:14px;color:#262626">АР 2 этаж / ОВ</div>
<div class="a" style="left:0;top:128px;width:1241px;height:32px;background:#b1b1b1;border-top:1px solid #999999"></div><div class="cbd" style="left:18px;top:137px"></div><div class="t" style="left:76px;top:137px;font-size:14px;color:#262626">новая</div><div class="t" style="left:177px;top:137px;font-size:14px;color:#262626">АР - ОВ</div><div class="a" style="left:292px;top:137px;width:272px;height:18px;overflow:hidden"><div class="t" style="left:0;top:0;font-size:14px;color:#262626">Монолитная лестница:Лестница:2056173</div></div><div class="a" style="left:580px;top:137px;width:277px;height:18px;overflow:hidden"><div class="t" style="left:0;top:0;font-size:14px;color:#262626">Изоляция воздуховода:ADSK_Огнезащита</div></div><div class="t" style="left:873px;top:137px;font-size:14px;color:#262626">АР 2 этаж / ОВ</div>
<div class="a" style="left:0;top:160px;width:1241px;height:32px;background:#a4a4a4;border-top:1px solid #999999"></div><div class="cbd" style="left:18px;top:169px"></div><div class="t" style="left:76px;top:169px;font-size:14px;color:#262626">новая</div><div class="t" style="left:177px;top:169px;font-size:14px;color:#262626">АР - ОВ</div><div class="a" style="left:292px;top:169px;width:272px;height:18px;overflow:hidden"><div class="t" style="left:0;top:0;font-size:14px;color:#262626">Базовая стена:ADSK_Внутренняя_Кирпич</div></div><div class="a" style="left:580px;top:169px;width:277px;height:18px;overflow:hidden"><div class="t" style="left:0;top:0;font-size:14px;color:#262626">Воздуховод прямоугольного сечения:ADSK</div></div><div class="t" style="left:873px;top:169px;font-size:14px;color:#262626">АР 2 этаж / ОВ</div>
<div class="a" style="left:0;top:192px;width:1241px;height:32px;background:#b1b1b1;border-top:1px solid #999999"></div><div class="cbd" style="left:18px;top:201px"></div><div class="t" style="left:76px;top:201px;font-size:14px;color:#262626">новая</div><div class="t" style="left:177px;top:201px;font-size:14px;color:#262626">АР - ОВ</div><div class="a" style="left:292px;top:201px;width:272px;height:18px;overflow:hidden"><div class="t" style="left:0;top:0;font-size:14px;color:#262626">Базовая стена:ADSK_Внутренняя_Кирпич</div></div><div class="a" style="left:580px;top:201px;width:277px;height:18px;overflow:hidden"><div class="t" style="left:0;top:0;font-size:14px;color:#262626">Воздуховод прямоугольного сечения:ADSK</div></div><div class="t" style="left:873px;top:201px;font-size:14px;color:#262626">АР 2 этаж / ОВ</div>
<div class="a" style="left:0;top:224px;width:1241px;height:32px;background:#a4a4a4;border-top:1px solid #999999"></div><div class="cbd" style="left:18px;top:233px"></div><div class="t" style="left:76px;top:233px;font-size:14px;color:#262626">новая</div><div class="t" style="left:177px;top:233px;font-size:14px;color:#262626">АР - ОВ</div><div class="a" style="left:292px;top:233px;width:272px;height:18px;overflow:hidden"><div class="t" style="left:0;top:0;font-size:14px;color:#262626">Базовая стена:ADSK_Внутренняя_Кирпич</div></div><div class="a" style="left:580px;top:233px;width:277px;height:18px;overflow:hidden"><div class="t" style="left:0;top:0;font-size:14px;color:#262626">Изоляция воздуховода:ADSK_Огнезащита</div></div><div class="t" style="left:873px;top:233px;font-size:14px;color:#262626">АР 2 этаж / ОВ</div>
<div class="a" style="left:0;top:256px;width:1241px;height:32px;background:#b1b1b1;border-top:1px solid #999999"></div><div class="cbd" style="left:18px;top:265px"></div><div class="t" style="left:76px;top:265px;font-size:14px;color:#262626">новая</div><div class="t" style="left:177px;top:265px;font-size:14px;color:#262626">АР - ОВ</div><div class="a" style="left:292px;top:265px;width:272px;height:18px;overflow:hidden"><div class="t" style="left:0;top:0;font-size:14px;color:#262626">Базовая стена:ADSK_Внутренняя_Кирпич</div></div><div class="a" style="left:580px;top:265px;width:277px;height:18px;overflow:hidden"><div class="t" style="left:0;top:0;font-size:14px;color:#262626">Воздуховод прямоугольного сечения:ADSK</div></div><div class="t" style="left:873px;top:265px;font-size:14px;color:#262626">АР 2 этаж / ОВ</div>
<div class="a" style="left:0;top:288px;width:1241px;height:32px;background:#a4a4a4;border-top:1px solid #999999"></div><div class="cbd" style="left:18px;top:297px"></div><div class="t" style="left:76px;top:297px;font-size:14px;color:#262626">новая</div><div class="t" style="left:177px;top:297px;font-size:14px;color:#262626">АР - ОВ</div><div class="a" style="left:292px;top:297px;width:272px;height:18px;overflow:hidden"><div class="t" style="left:0;top:0;font-size:14px;color:#262626">Базовая стена:ADSK_Внутренняя_Кирпич</div></div><div class="a" style="left:580px;top:297px;width:277px;height:18px;overflow:hidden"><div class="t" style="left:0;top:0;font-size:14px;color:#262626">Воздуховод прямоугольного сечения:ADSK</div></div><div class="t" style="left:873px;top:297px;font-size:14px;color:#262626">АР 2 этаж / ОВ</div>
<div class="a" style="left:60px;top:32px;width:1px;height:300px;background:#2a2a2a"></div><div class="a" style="left:160px;top:32px;width:1px;height:300px;background:#2a2a2a"></div><div class="a" style="left:276px;top:32px;width:1px;height:300px;background:#2a2a2a"></div><div class="a" style="left:564px;top:32px;width:1px;height:300px;background:#2a2a2a"></div><div class="a" style="left:857px;top:32px;width:1px;height:300px;background:#2a2a2a"></div><div class="a" style="left:1057px;top:32px;width:1px;height:300px;background:#2a2a2a"></div></div>
<div class="a" style="left:527px;top:780px;width:1251px;height:10px;background:#434343"></div>
<div class="a" style="left:539px;top:782px;width:732px;height:6px;background:#2c6b80;border-radius:3px"></div>
<svg style="left:529px;top:782px" width="4" height="7"><path d="M3.5 0L0 3.5L3.5 7Z" fill="#2c6b80"/></svg>
<svg style="left:1762px;top:782px" width="4" height="7"><path d="M0 0L3.5 3.5L0 7Z" fill="#2c6b80"/></svg>
<div class="a" style="left:1768px;top:472px;width:10px;height:308px;background:#434343"></div>
<div class="a" style="left:1770px;top:452px;width:6px;height:160px;background:#2c6b80;border-radius:3px"></div>
<svg style="left:1770px;top:444px" width="6" height="4"><path d="M0 3.5L3 0L6 3.5Z" fill="#2c6b80"/></svg>
<svg style="left:1770px;top:773px" width="6" height="4"><path d="M0 0L3 3.5L6 0Z" fill="#2c6b80"/></svg>
<div class="a" style="left:1786px;top:37px;width:35px;height:756px;background:#3b3b3b"></div>
<div class="a" style="left:1786px;top:77px;width:35px;height:1px;background:#222"></div>
<div class="a" style="left:1786px;top:170px;width:35px;height:2px;background:#262626"></div>
<div class="a" style="left:1786px;top:483px;width:35px;height:2px;background:#262626"></div>
<div class="a" style="left:1786px;top:533px;width:35px;height:2px;background:#262626"></div>
<div class="a" style="left:1786px;top:712px;width:35px;height:2px;background:#262626"></div>
<svg style="left:1786px;top:37px" width="35" height="756">
<g fill="none" stroke="#a9a9a9" stroke-width="1.5">
<path d="M9.8 16.5V12H14.3M21.7 12H26.2V16.5M26.2 23V27.5H21.7M14.3 27.5H9.8V23"/>
</g>
<path d="M18 14.8L22.2 17.3V22.2L18 24.7L13.8 22.2V17.3Z" fill="#a9a9a9"/>
<g fill="none" stroke="#a9a9a9" stroke-width="1.5">
<path d="M13.5 70H10.5A4.6 4.6 0 0 1 9.6 61A8.2 8.2 0 0 1 26.2 61A4.6 4.6 0 0 1 25.5 70H22.5M18 60V77M18 68.8L13 65.3M18 65L22 61.8"/>
</g>
<g fill="none" stroke="#a9a9a9" stroke-width="1.4">
<path d="M14 113.5H5.8V96.8H28.2V104.5M10.5 113.5V116H13.6"/>
<path d="M18.8 106H15.5V109.5M27.5 106H30.8V109.5M30.8 118V121.3H27.5M18.8 121.3H15.5V118"/>
</g>
<path d="M23 110L27 112.3V117L23 119.3L19 117V112.3Z" fill="#a9a9a9"/>
<g fill="none" stroke="#a9a9a9" stroke-width="1.3">
<rect x="8" y="155" width="19" height="6"/><path d="M8 163.5H27M11 155V158M14 155V158M17 155V158M20 155V158M23 155V158"/>
</g>
<path d="M4 168L8 172H4Z" fill="#a9a9a9"/>
<path d="M12.9 195.3L22.7 188.5V198.3H12.9Z M12.9 204.4H22.7V206.6L12.9 215.7Z" fill="#a9a9a9"/>
<path d="M4.5 204.4L11.4 198.3H31L24 204.4Z" fill="none" stroke="#a9a9a9" stroke-width="1.3"/>
<g fill="none" stroke="#a9a9a9" stroke-width="1.3"><rect x="6" y="240" width="16.7" height="16.6"/><rect x="12.8" y="235.5" width="16.7" height="16.5"/><path d="M6 240L12.8 235.5M22.7 240L29.5 235.5M22.7 256.6L29.5 252M6 256.6L12.8 252"/></g>
<path d="M15 241L20.5 237V253L15 257Z" fill="#a9a9a9"/>
<path d="M6.5 299.5V301.5H32V281.5H30" fill="none" stroke="#a9a9a9" stroke-width="1.2"/>
<path d="M4 283.5L7.5 279.5H30V299.5H4Z" fill="none" stroke="#a9a9a9" stroke-width="1.5"/>
<g stroke="#a9a9a9" stroke-width="1.2" stroke-dasharray="2 1.5"><path d="M5 289.5H29M16.5 280V299"/></g>
<path d="M22 296V299H29V296Z" fill="none" stroke="#a9a9a9" stroke-width="1.2"/>
<g fill="none" stroke="#a9a9a9" stroke-width="1.6"><circle cx="18" cy="334" r="8"/><path d="M18 322V326M18 342V346M6 334H10M26 334H30"/></g>
<circle cx="18" cy="334" r="4.5" fill="#a9a9a9"/>
<g fill="none" stroke="#a9a9a9" stroke-width="1.3"><circle cx="18" cy="378" r="12.5"/><path d="M12 384.5V371H18.5L20.5 373.5H26V381H20.5L18.5 378.5H12"/></g>
<text x="6" y="420.5" font-family="Liberation Sans" font-weight="bold" font-size="14.5" fill="#a9a9a9">S</text>
<g fill="none" stroke="#a9a9a9" stroke-width="1.2" stroke-dasharray="1.5 1.5"><path d="M19.4 411.5V423.6H7.7V432.5H28.3V411.5"/></g>
<path d="M19.4 411.5H28.3" stroke="#a9a9a9" stroke-width="1.2"/>
<g fill="#a9a9a9"><rect x="18" y="410" width="3" height="3"/><rect x="27" y="410" width="3" height="3"/><rect x="6.2" y="422.1" width="3" height="3"/><rect x="18" y="422.1" width="3" height="3"/><rect x="6.2" y="431" width="3" height="3"/><rect x="27" y="431" width="3" height="3"/></g>
<g fill="none" stroke="#a9a9a9" stroke-width="1.1"><path d="M5.1 483.8L31.5 468.4M5.1 474.4L31.5 459.1M6.8 470.1L23 479.5M14.5 464.2L31.5 473.6"/></g>
<text x="3.5" y="470" font-family="Liberation Sans" font-size="7" fill="#a9a9a9">1</text>
<text x="13" y="463.5" font-family="Liberation Sans" font-size="7" fill="#a9a9a9">2</text>
<g fill="none" stroke="#a9a9a9" stroke-width="1.1" stroke-dasharray="2.5 2"><rect x="6.5" y="508.5" width="23.5" height="23.5"/><rect x="6.5" y="552.5" width="23.5" height="23.5"/><rect x="6.5" y="596.5" width="23.5" height="23.5"/><rect x="6.5" y="640.5" width="23.5" height="23.5"/></g>
<g fill="none" stroke="#a9a9a9" stroke-width="1.2"><path d="M12.5 516.5L18 513.5L23.5 516.5V523.5L18 526.5L12.5 523.5ZM12.5 516.5L18 519.5L23.5 516.5M18 519.5V526.5"/></g>
<path d="M10.5 564C13 560.5 15.5 559 18 559S23 560.5 25.5 564C23 567.5 20.5 569 18 569S13 567.5 10.5 564Z" fill="#a9a9a9"/><circle cx="18" cy="564" r="2.6" fill="#3b3b3b"/><circle cx="18" cy="564" r="1.3" fill="#a9a9a9"/>
<path d="M10.5 608C13 604.5 15.5 603 18 603S23 604.5 25.5 608C23 611.5 20.5 613 18 613S13 611.5 10.5 608Z" fill="#a9a9a9"/><circle cx="18" cy="608" r="2.6" fill="#3b3b3b"/><path d="M11 601L25 615" stroke="#3b3b3b" stroke-width="3"/><path d="M11 601L25 615" stroke="#a9a9a9" stroke-width="1.3"/>
<rect x="16" y="650" width="16" height="16" fill="#a9a9a9"/><path d="M19.5 653.5L28.5 662.5M28.5 653.5L19.5 662.5" stroke="#3b3b3b" stroke-width="1.5"/>
<rect x="2" y="685" width="32" height="32" fill="#5b5b5b"/>
<path d="M17.9 695.8L27.9 694.1L26.8 705.2L17.9 711.9Z M7.9 693L17.9 690.8L27.9 694.1L17.9 695.8Z" fill="#5a5a5a" stroke="#a9a9a9" stroke-width="1.3" stroke-linejoin="round"/>
<path d="M7.9 693L17.9 695.8V711.9L9 705.2Z" fill="#a9a9a9"/>
<rect x="2" y="729" width="32" height="32" fill="#5b5b5b"/>
<g fill="none" stroke="#a9a9a9" stroke-width="1.7"><ellipse cx="18" cy="745.6" rx="11.8" ry="5.2"/><ellipse cx="18" cy="746.5" rx="5.3" ry="12.5"/></g>
<path d="M18.4 741V744L15 748M18.4 744L21.8 748" stroke="#a9a9a9" stroke-width="1" fill="none"/>
</svg>
<div class="a" style="left:739px;top:241px;width:350px;height:310px;background:#ffffff;box-shadow:0 4px 12px rgba(0,0,0,0.4)"></div>
<div class="a" style="left:739px;top:241px;width:350px;height:44px;background:#555555"></div>
<div class="t" style="left:747px;top:255px;font-size:14px;color:#ececec;font-weight:bold;letter-spacing:-0.35px">Экспорт отчета</div>
<svg style="left:1063px;top:256px" width="15" height="14"><path d="M1 0.5L14 13.5M14 0.5L1 13.5" stroke="#f2f2f2" stroke-width="2.4"/></svg>
<div class="a" style="left:747px;top:296px;width:334px;height:40px;border:2px solid #2a86a2;border-radius:4px"></div>
<div class="a" style="left:758px;top:290px;width:56px;height:10px;background:#fff"></div>
<div class="t" style="left:763px;top:289px;font-size:12.5px;color:#222">Формат</div>
<div class="t" style="left:763px;top:308px;font-size:16px;color:#222">XLSX</div>
<svg style="left:1052px;top:313px" width="10" height="5"><path d="M0 5L5 0L10 5Z" fill="#666"/></svg>
<div class="a" style="left:747px;top:336px;width:334px;height:208px;background:#fff;border-radius:0 0 4px 4px;box-shadow:0 5px 6px -3px rgba(0,0,0,0.2),0 8px 10px 1px rgba(0,0,0,0.14),0 3px 14px 2px rgba(0,0,0,0.12)"></div>
<div class="a" style="left:747px;top:344px;width:334px;height:48px;background:#e6f1f4"></div>
<div class="t" style="left:763px;top:360px;font-size:16px;color:#3d97b2">XLSX</div>
<div class="t" style="left:763px;top:408px;font-size:16px;color:#585858">PDF</div>
<div class="t" style="left:763px;top:456px;font-size:16px;color:#585858">DOCX</div>
<div class="t" style="left:763px;top:504px;font-size:16px;color:#585858">BCF</div>
<svg style="left:0;top:0" width="1821" height="793"><defs><filter id="sh" x="-20%" y="-20%" width="140%" height="140%"><feGaussianBlur stdDeviation="2"/></filter></defs>
<g opacity="0.5" filter="url(#sh)" transform="translate(1,3)"><path d="M943 246L1030 304" stroke="#000" stroke-width="3.2"/><path d="M1046 315L1025 311L1037 298Z" fill="#000"/></g>
<path d="M943 246L1030 304" stroke="#cc0000" stroke-width="3.2"/><path d="M1046.5 315.5L1024.5 311.5L1038 297.5Z" fill="#cc0000"/></svg>
</body></html>
